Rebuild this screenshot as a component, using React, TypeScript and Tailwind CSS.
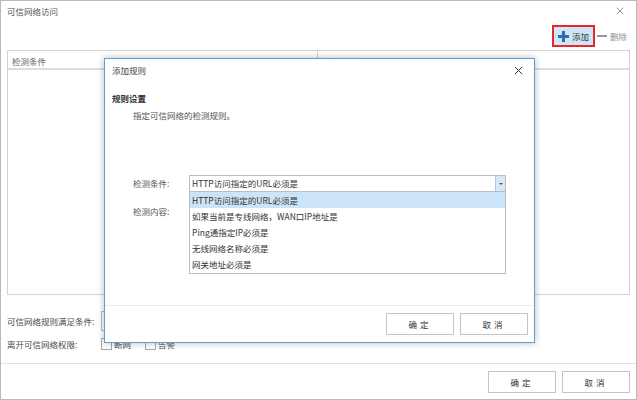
import { useState } from "react";

const options = [
  "HTTP访问指定的URL必须是",
  "如果当前是专线网络，WAN口IP地址是",
  "Ping通指定IP必须是",
  "无线网络名称必须是",
  "网关地址必须是",
];

function CloseIcon({ className }: { className?: string }) {
  return (
    <svg className={className} viewBox="0 0 10 10" fill="none" stroke="currentColor" strokeWidth={1.1}>
      <path d="M1 1 L9 9 M9 1 L1 9" />
    </svg>
  );
}

function Button({ label }: { label: string }) {
  return (
    <button className="h-[22px] w-[68px] border border-[#c4c4c4] bg-white text-[8.5px] tracking-[3px] text-[#333]">
      {label}
    </button>
  );
}

function Checkbox({ label }: { label: string }) {
  return (
    <label className="flex items-center gap-[2px]">
      <span className="h-[12px] w-[11px] border border-[#a8a8a8] bg-white" />
      <span>{label}</span>
    </label>
  );
}

function RuleModal() {
  const [selected] = useState(0);

  return (
    <div className="absolute left-[103px] top-[57px] flex h-[285px] w-[431px] flex-col border border-[#5f9dd8] bg-white shadow-[0_0_7px_rgba(0,0,0,0.28)]">
      {/* Header */}
      <div className="flex h-[22px] shrink-0 items-center justify-between pl-[7px] pr-[11px]">
        <span className="text-[#444]">添加规则</span>
        <CloseIcon className="h-[9px] w-[9px] text-[#333]" />
      </div>

      <div className="pl-[7px] pt-[10px] font-bold leading-[14px] text-[#333]">规则设置</div>
      <div className="pl-[28px] pt-[3px] leading-[14px] text-[#555]">指定可信网络的检测规则。</div>

      {/* Form */}
      <div className="mt-[53px] flex flex-col gap-[11px] pl-[28px]">
        <div className="flex h-[17px] items-center">
          <span className="w-[56px] text-[#555]">检测条件:</span>
          <div className="relative z-10 h-[17px] w-[317px]">
            <div className="flex h-full items-center border border-[#bdbdbd] bg-white">
              <span className="flex-1 pl-[2px] text-[#333]">{options[selected]}</span>
              <span className="flex h-full w-[10px] items-center justify-center border-l border-[#a9cbe9] bg-[#d7e8f7]">
                <span className="h-0 w-0 border-x-[2px] border-t-[2px] border-x-transparent border-t-[#555]" />
              </span>
            </div>
            <div className="absolute left-0 top-full w-full border border-t-0 border-[#bdbdbd] bg-white pb-[1px]">
              {options.map((opt, i) => (
                <div
                  key={opt}
                  className={`flex h-[16px] items-center pl-[2px] text-[#333] ${i === selected ? "bg-[#cce4f7]" : ""}`}
                >
                  {opt}
                </div>
              ))}
            </div>
          </div>
        </div>
        <div className="flex h-[17px] items-center">
          <span className="w-[56px] text-[#555]">检测内容:</span>
          <div className="h-[17px] w-[317px] border border-[#bdbdbd] bg-white" />
        </div>
      </div>

      {/* Footer */}
      <div className="mt-auto flex justify-end gap-[6px] border-t border-[#ebebeb] pb-[7px] pr-[6px] pt-[7px]">
        <Button label="确定" />
        <Button label="取消" />
      </div>
    </div>
  );
}

export default function App() {
  return (
    <div className="relative flex h-[400px] w-[637px] flex-col border border-[#b9b9b9] bg-white font-[family-name:'Noto_Sans_CJK_SC',sans-serif] text-[8.5px] text-[#4a4a4a]">
      {/* Title */}
      <div className="flex h-[20px] shrink-0 items-center justify-between pl-[6px] pr-[12px]">
        <span className="text-[#555]">可信网络访问</span>
        <CloseIcon className="h-[8px] w-[8px] text-[#8a8a8a]" />
      </div>

      {/* Toolbar */}
      <div className="mt-[4px] flex h-[22px] shrink-0 items-center justify-end gap-[2px] pr-[9px]">
        <div className="flex h-[22px] items-center gap-[3px] border-2 border-[#e8262b] bg-[#cfe6f7] pl-[4px] pr-[4px]">
          <svg className="h-[11px] w-[11px]" viewBox="0 0 11 11" fill="#2c6db5">
            <rect x="4" y="0" width="3" height="11" />
            <rect x="0" y="4" width="11" height="3" />
          </svg>
          <span className="text-[#333]">添加</span>
        </div>
        <div className="flex items-center gap-[3px] text-[#8f8f8f]">
          <span className="h-[2px] w-[10px] bg-[#999]" />
          <span>删除</span>
        </div>
      </div>

      {/* Rule table */}
      <div className="mx-[6px] mt-[3px] flex h-[245px] shrink-0 flex-col border border-[#d2d2d2]">
        <div className="flex h-[19px] shrink-0 border-b-2 border-[#dcdcdc] text-[#666]">
          <div className="flex w-[310px] items-center border-r border-[#d2d2d2] pl-[4px] pt-[3px]">检测条件</div>
          <div className="flex flex-1 items-center pl-[4px] pt-[3px]">检测内容</div>
        </div>
        <div className="flex-1" />
      </div>

      {/* Settings */}
      <div className="mt-[16px] flex flex-col gap-[6px] pl-[6px]">
        <div className="flex h-[20px] items-center">
          <span className="w-[94px]">可信网络规则满足条件:</span>
          <div className="h-[20px] w-[200px] border border-[#bdbdbd] bg-white" />
        </div>
        <div className="flex h-[14px] items-center">
          <span className="w-[94px]">离开可信网络权限:</span>
          <div className="flex items-center gap-[14px]">
            <Checkbox label="断网" />
            <Checkbox label="告警" />
          </div>
        </div>
      </div>

      {/* Footer */}
      <div className="mt-auto flex justify-end gap-[6px] border-t border-[#e2e2e2] pb-[6px] pr-[6px] pt-[7px]">
        <Button label="确定" />
        <Button label="取消" />
      </div>

      <RuleModal />
    </div>
  );
}
